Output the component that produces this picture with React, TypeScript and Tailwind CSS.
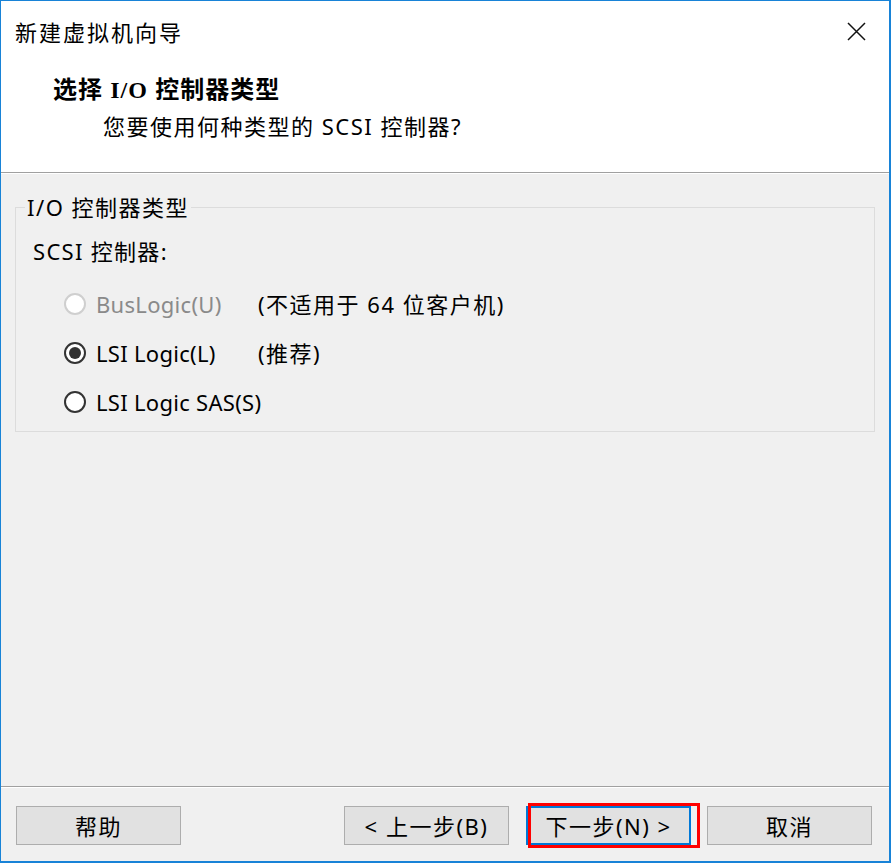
import React from 'react';

const font = { fontFamily: '"Noto Sans", "Noto Sans CJK SC", sans-serif' };

type RadioProps = {
  label: string;
  note?: string;
  checked?: boolean;
  disabled?: boolean;
};

const Radio: React.FC<RadioProps> = ({ label, note, checked, disabled }) => {
  return (
    <div className="flex h-[49px] items-center pl-[48px]">
      {/* radio circle */}
      <span
        className={`flex h-[22px] w-[22px] shrink-0 items-center justify-center rounded-full border-2 bg-white ${
          disabled ? 'border-[#cfcfcf]' : 'border-[#333333]'
        }`}
      >
        {checked && <span className="h-[12px] w-[12px] rounded-full bg-[#333333]" />}
      </span>
      <span
        className={`ml-[10px] w-[162px] shrink-0 whitespace-nowrap tracking-[0.3px] ${
          disabled ? 'text-[#8a8a8a]' : 'text-black'
        }`}
      >
        {label}
      </span>
      {note && <span className="whitespace-nowrap tracking-[1.5px] text-black">{note}</span>}
    </div>
  );
};

const Button: React.FC<{ children: React.ReactNode; active?: boolean }> = ({ children, active }) => {
  return (
    <div
      className={`flex h-[39px] w-[165px] items-center justify-center bg-[#e1e1e1] tracking-[1.5px] text-black ${
        active ? 'border-2 border-[#0078d7]' : 'border border-[#adadad]'
      }`}
    >
      {children}
    </div>
  );
};

export default function App() {
  return (
    <div
      className="flex h-[863px] w-[891px] flex-col border-t border-l border-r-2 border-b-2 border-[#1883d7] bg-white text-[22px] leading-[28px]"
      style={font}
    >
      {/* Title bar */}
      <div className="flex h-[61px] shrink-0 items-center justify-between pl-[14px] pr-[23px]">
        <span className="tracking-[2px] text-black">新建虚拟机向导</span>
        <svg width="19" height="19" viewBox="0 0 19 19">
          <path d="M1 1 L18 18 M18 1 L1 18" stroke="#111" strokeWidth="1.5" fill="none" />
        </svg>
      </div>

      {/* Header */}
      <div className="flex h-[110px] shrink-0 flex-col">
        <div className="mt-[13px] pl-[52px] text-[24px] font-bold tracking-[1px] text-black">
          选择 <span style={{ fontFamily: '"Liberation Serif", serif' }}>I/O</span> 控制器类型
        </div>
        <div className="mt-[8px] pl-[102px] tracking-[1.5px] text-black">您要使用何种类型的 SCSI 控制器?</div>
      </div>

      {/* separator */}
      <div className="h-[2px] shrink-0 border-t border-[#a0a0a0] bg-white" />

      {/* Body */}
      <div className="flex flex-1 flex-col bg-[#f0f0f0] px-[14px]">
        <fieldset className="mt-[19px] border border-[#dcdcdc] pb-[5px]">
          <legend className="ml-[9px] px-[2px] tracking-[1.5px] text-black">I/O 控制器类型</legend>
          <div className="mt-[16px] pl-[17px] tracking-[1.3px] text-black">SCSI 控制器:</div>
          <div className="mt-[14px] flex flex-col">
            <Radio label="BusLogic(U)" note="(不适用于 64 位客户机)" disabled />
            <Radio label="LSI Logic(L)" note="(推荐)" checked />
            <Radio label="LSI Logic SAS(S)" />
          </div>
        </fieldset>
      </div>

      {/* separator */}
      <div className="h-[2px] shrink-0 border-t border-[#a0a0a0] bg-white" />

      {/* Footer */}
      <div className="flex h-[73px] shrink-0 items-start bg-[#f0f0f0] pt-[18px] pl-[15px]">
        <Button>帮助</Button>
        <div className="ml-[163px]">
          <Button>&lt; 上一步(B)</Button>
        </div>
        <div className="relative ml-[17px]">
          <Button active>下一步(N) &gt;</Button>
          <div className="pointer-events-none absolute top-[-3px] left-[2px] h-[45px] w-[172px] border-[3px] border-[#ff0000]" />
        </div>
        <div className="ml-[16px]">
          <Button>取消</Button>
        </div>
      </div>
    </div>
  );
}
